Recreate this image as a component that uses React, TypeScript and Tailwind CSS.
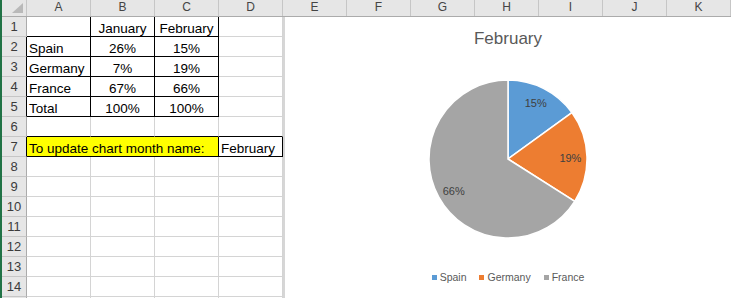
type Cell = {
  t?: string;
  w?: number;
  center?: boolean;
  r?: boolean;
  b?: boolean;
  yellow?: boolean;
};

// last header cell is the clipped sliver after K
const COLS = ["A", "B", "C", "D", "E", "F", "G", "H", "I", "J", "K", ""];

const dataRow = (name: string, jan: string, feb: string): Cell[] => [
  { t: name, r: true, b: true },
  { t: jan, center: true, r: true, b: true },
  { t: feb, center: true, r: true, b: true },
  {},
];

const empty: Cell[] = [{}, {}, {}, {}];

// sheet rows 1..14 plus a clipped one below
const ROWS: { n: string; edge?: boolean; cells: Cell[] }[] = [
  {
    n: "1",
    cells: [
      { r: true, b: true },
      { t: "January", center: true, r: true, b: true },
      { t: "February", center: true, r: true, b: true },
      {},
    ],
  },
  { n: "2", edge: true, cells: dataRow("Spain", "26%", "15%") },
  { n: "3", edge: true, cells: dataRow("Germany", "7%", "19%") },
  { n: "4", edge: true, cells: dataRow("France", "67%", "66%") },
  { n: "5", edge: true, cells: dataRow("Total", "100%", "100%") },
  { n: "6", cells: [{ b: true }, { b: true }, { b: true }, { b: true }] },
  {
    n: "7",
    edge: true,
    cells: [
      { t: "To update chart month name:", w: 192, yellow: true, r: true, b: true },
      { t: "February", r: true, b: true },
    ],
  },
  ...["8", "9", "10", "11", "12", "13", "14", ""].map((n) => ({ n, cells: empty })),
];

function PieChart() {
  return (
    <svg width="160" height="160" viewBox="0 0 160 160">
      <path d="M80 80 L80 1 A79 79 0 0 1 143.91 33.56 Z" fill="#5b9bd5" stroke="#fff" strokeWidth="1.5" />
      <path d="M80 80 L143.91 33.56 A79 79 0 0 1 146.7 122.33 Z" fill="#ed7d31" stroke="#fff" strokeWidth="1.5" />
      <path d="M80 80 L146.7 122.33 A79 79 0 1 1 80 1 Z" fill="#a5a5a5" stroke="#fff" strokeWidth="1.5" />
      <g fill="#404040" fontSize="11" fontFamily="Liberation Sans, sans-serif" textAnchor="middle" dominantBaseline="central">
        <text x="107.7" y="24.3">15%</text>
        <text x="142.4" y="79.3">19%</text>
        <text x="25.7" y="111.7">66%</text>
      </g>
    </svg>
  );
}

function LegendItem({ color, label }: { color: string; label: string }) {
  return (
    <div className="flex items-center gap-[3px]">
      <span className={`w-[5px] h-[5px] ${color}`} />
      <span>{label}</span>
    </div>
  );
}

export default function App() {
  return (
    <div className="flex w-[731px] h-[298px] overflow-hidden bg-white font-['Liberation_Sans',sans-serif]">
      {/* Excel window edge */}
      <div className="w-[2px] shrink-0 bg-[#217346]" />

      <div className="flex flex-col flex-1 min-w-0">
        {/* Column headers */}
        <div className="flex h-[17px] shrink-0 bg-[#e6e6e6] border-b border-[#ababab] text-[12px] text-[#444]">
          <div className="w-[25px] shrink-0 border-r border-[#c6c6c6] flex justify-end items-end pr-[3px] pb-[3px]">
            <svg width="11" height="10" viewBox="0 0 11 10">
              <polygon points="11,0 11,10 0,10" fill="#b9b9b9" />
            </svg>
          </div>
          {COLS.map((c, i) => (
            <div
              key={i}
              className="w-[64px] shrink-0 border-r border-[#c6c6c6] flex items-center justify-center pb-[2px] leading-[14px]"
            >
              {c}
            </div>
          ))}
        </div>

        <div className="flex flex-1 min-h-0">
          {/* Sheet grid */}
          <div className="w-[281px] shrink-0 flex flex-col text-[13.5px] text-black">
            {ROWS.map((row, r) => (
              <div key={r} className="flex h-[20px] shrink-0">
                <div
                  className={`w-[25px] shrink-0 bg-[#e6e6e6] border-b border-b-[#c6c6c6] border-r flex items-center justify-center text-[13px] text-[#3b3b3b] ${
                    row.edge ? "border-r-black" : "border-r-[#ababab]"
                  }`}
                >
                  {row.n}
                </div>
                {row.cells.map((cell, i) => (
                  <div
                    key={i}
                    className={`shrink-0 border-r border-b flex items-end leading-[15px] whitespace-nowrap ${
                      cell.w ? "w-[192px]" : "w-[64px]"
                    } ${cell.r ? "border-r-black" : "border-r-[#d4d4d4]"} ${
                      cell.b ? "border-b-black" : "border-b-[#d4d4d4]"
                    } ${cell.center ? "justify-center" : "pl-[2px]"} ${cell.yellow ? "bg-[#ffff00]" : ""}`}
                  >
                    {cell.t}
                  </div>
                ))}
              </div>
            ))}
          </div>

          {/* Chart */}
          <div className="flex-1 border-l-2 border-[#d6d6d6] bg-white flex flex-col items-center">
            <div className="mt-[12px] text-[17px] leading-[20px] text-[#595959]">February</div>
            <div className="mt-[30px]">
              <PieChart />
            </div>
            <div className="mt-[31px] flex gap-[13px] text-[10.5px] leading-[14px] text-[#595959]">
              <LegendItem color="bg-[#5b9bd5]" label="Spain" />
              <LegendItem color="bg-[#ed7d31]" label="Germany" />
              <LegendItem color="bg-[#a5a5a5]" label="France" />
            </div>
          </div>
        </div>
      </div>
    </div>
  );
}
